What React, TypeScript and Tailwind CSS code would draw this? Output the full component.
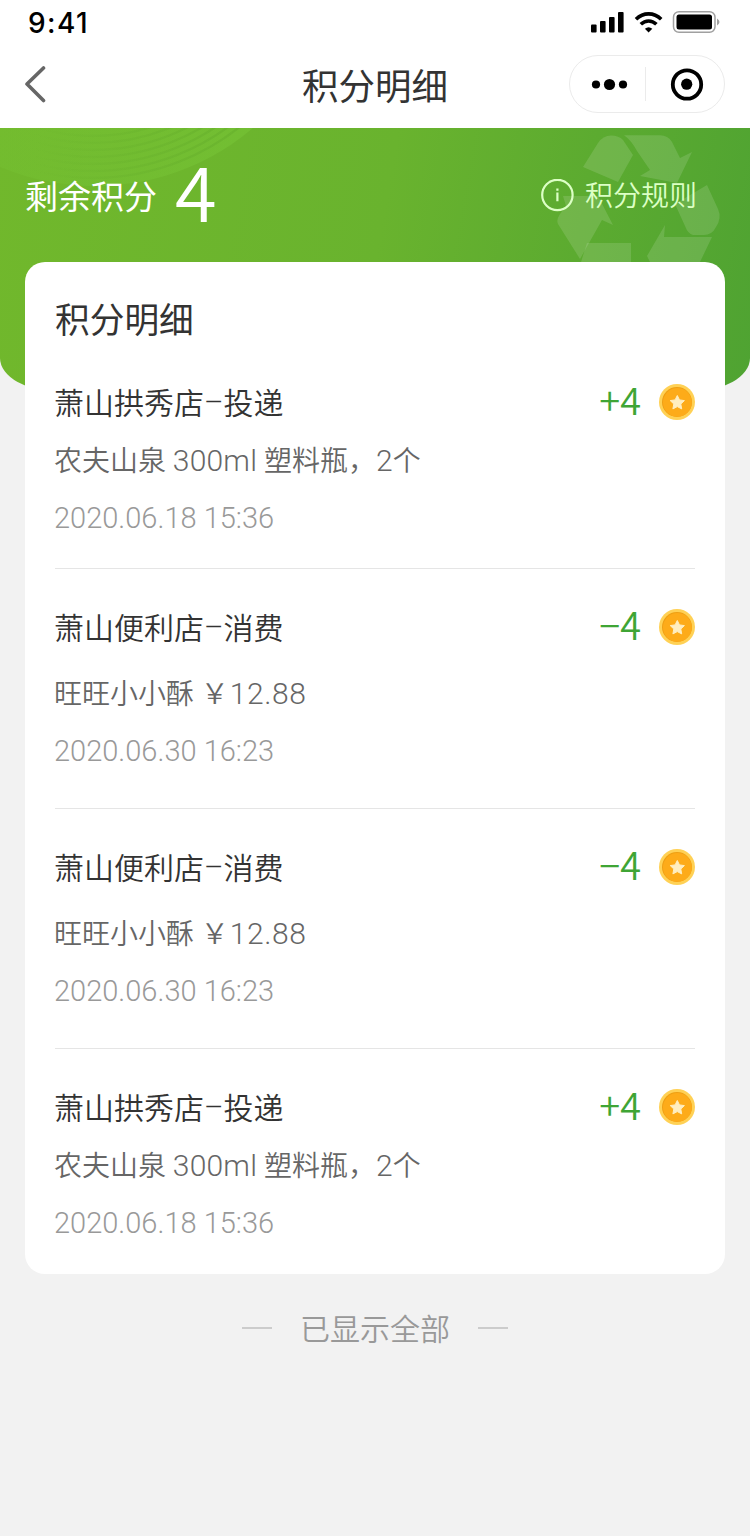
type PointRecord = {
  id: number;
  title: string;
  detail: string;
  time: string;
  change: string;
  compact?: boolean;
};

const records: PointRecord[] = [
  { id: 1, title: "萧山拱秀店–投递", detail: "农夫山泉 300ml 塑料瓶，2个", time: "2020.06.18 15:36", change: "+4", compact: true },
  { id: 2, title: "萧山便利店–消费", detail: "旺旺小小酥 ￥12.88", time: "2020.06.30 16:23", change: "−4" },
  { id: 3, title: "萧山便利店–消费", detail: "旺旺小小酥 ￥12.88", time: "2020.06.30 16:23", change: "−4" },
  { id: 4, title: "萧山拱秀店–投递", detail: "农夫山泉 300ml 塑料瓶，2个", time: "2020.06.18 15:36", change: "+4", compact: true },
];

const RINGS = [236, 229, 222, 215, 208, 201, 194];

function StatusIcons() {
  return (
    <svg width="132" height="24" viewBox="0 0 132 24">
      <rect x="3" y="14.5" width="5.6" height="8" rx="1" />
      <rect x="12" y="11" width="5.6" height="11.5" rx="1" />
      <rect x="21" y="7" width="5.6" height="15.5" rx="1" />
      <rect x="30" y="2" width="5.6" height="20.5" rx="1" />
      <g fill="none" stroke="#000" strokeWidth="3.6">
        <path d="M48 9.3C55.4 2 65.8 2 73.2 9.3" />
        <path d="M52.8 14.3C57.5 9.8 63.7 9.8 68.4 14.3" />
      </g>
      <path d="M60.6 22.5L56.9 18.7Q60.6 15.7 64.3 18.7Z" />
      <rect x="85.5" y="1.7" width="41.5" height="20.6" rx="5.5" fill="none" stroke="#a0a0a0" strokeWidth="1.5" />
      <rect x="88.5" y="4.5" width="35.5" height="15" rx="2.5" />
      <path d="M129 8.5Q134 12 129 15.5Z" fill="#a0a0a0" />
    </svg>
  );
}

function Capsule() {
  return (
    <div className="flex h-[58px] w-[156px] items-center rounded-full border border-[#ebebeb]">
      <svg className="w-[75px]" height="20" viewBox="0 0 75 20">
        <circle cx="26" cy="10.5" r="4.1" />
        <circle cx="39.5" cy="10.5" r="5.6" />
        <circle cx="53" cy="10.5" r="4.1" />
      </svg>
      <div className="h-[34px] w-px bg-[#ebebeb]" />
      <svg className="ml-6" width="34" height="34" viewBox="0 0 34 34">
        <circle cx="17" cy="17.5" r="14.2" fill="none" stroke="#000" strokeWidth="3.8" />
        <circle cx="16.7" cy="17.2" r="5.6" />
      </svg>
    </div>
  );
}

function HeroArt() {
  return (
    <svg className="absolute left-0 top-0" width="750" height="134" viewBox="0 0 750 134">
      <defs>
        <linearGradient id="disc" gradientUnits="userSpaceOnUse" x1="0" y1="0" x2="250" y2="0">
          <stop offset="0" stopColor="#7ccc3a" stopOpacity="0.2" />
          <stop offset="1" stopColor="#7ccc3a" stopOpacity="0.4" />
        </linearGradient>
        <linearGradient id="rings" gradientUnits="userSpaceOnUse" x1="30" y1="0" x2="240" y2="0">
          <stop offset="0" stopColor="#5fa828" stopOpacity="0" />
          <stop offset="0.5" stopColor="#5fa828" stopOpacity="0.2" />
          <stop offset="1" stopColor="#5fa828" stopOpacity="0.4" />
        </linearGradient>
      </defs>
      <circle cx="95" cy="-186" r="244" fill="url(#disc)" />
      {RINGS.map(r => (
        <circle key={r} cx="93" cy="-186" r={r} fill="none" stroke="url(#rings)" strokeWidth="2.4" />
      ))}
      {/* Recycling arrows */}
      <g fill="#fff" fillOpacity="0.13">
        <path d="M583 39L598 15Q603 7.5 611 7.5Q619 7.5 623 12L633 27L618 54Z" />
        <path d="M624 7.3H660Q668 7.3 672 14L680 30L692 24L677 55L640 48L650 42L637 23Q631 12 624 7.3Z" />
        <path d="M675 76L707 57L718 81Q722 90 716 99Q712 107 704 107H693Q688 106 685 98Z" />
        <path d="M665 97L664 109H712L700 134H650L647 128Z" />
        <path d="M587 115H631V134H581Z" />
        <path d="M563 68H598L613 97L602 92L580 131L558 96Q556 92 560 86L566 78Z" />
      </g>
    </svg>
  );
}

function Coin() {
  return (
    <svg width="36" height="36" viewBox="0 0 36 36">
      <circle cx="18" cy="18" r="18" fill="#ffd155" />
      <circle cx="18" cy="18" r="15" fill="#ee9f14" />
      <circle cx="18.4" cy="18.4" r="14.4" fill="#fdab19" />
      <path d="M18.3 11.5L20.5 15.9L25.4 16.6L21.8 20L22.7 24.9L18.3 22.6L13.9 24.9L14.8 20L11.2 16.6L16.1 15.9Z" fill="#ffeec0" stroke="#ffeec0" strokeWidth="1" strokeLinejoin="round" />
    </svg>
  );
}

// Latin runs are set a little larger than the Chinese text around them
function Detail({ text }: { text: string }) {
  return (
    <>
      {text.split(/([0-9a-z.]+)/).map((part, i) =>
        i % 2 === 1 ? (
          <span key={i} className={part.includes(".") ? "ml-px text-[30px] tracking-[0.6px]" : "text-[30px] tracking-[0.2px]"}>{part}</span>
        ) : part
      )}
    </>
  );
}

function RecordRow({ record }: { record: PointRecord }) {
  const [store, kind] = record.title.split("–");

  return (
    <div className="-ml-px flex flex-col">
      <div className="flex h-10 items-center justify-between">
        <div className="pt-[3px] text-[30px] font-[350] leading-10 text-[#333]">
          {store}
          <span className="inline-block -translate-y-0.5 leading-none">–</span>
          {kind}
        </div>
        <div className="flex items-center gap-[18px]">
          <span className="-mt-1.5 font-['Noto_Sans_CJK_SC'] text-[38px] font-[350] leading-10 text-[#3fa535]">{record.change}</span>
          <Coin />
        </div>
      </div>
      <div className={`h-10 whitespace-pre pt-px text-[28px] font-[350] leading-10 text-[#666] ${record.compact ? "mt-[18px]" : "mt-[26px]"}`}>
        <Detail text={record.detail} />
      </div>
      <div className="mt-[18px] h-10 text-[29px] leading-10 text-[#999]">{record.time}</div>
    </div>
  );
}

export default function App() {
  return (
    <div className="h-[1536px] w-[750px] overflow-hidden bg-[#f2f2f2] font-[Roboto,'Noto_Sans_CJK_SC',sans-serif] font-light">
      <header className="h-32 bg-white">
        <div className="flex h-11 items-center justify-between pl-7 pr-[30px]">
          <div className="pt-px font-[Inter,sans-serif] text-[28px] font-medium leading-10 tracking-[1.4px] text-black">9:41</div>
          <StatusIcons />
        </div>
        <div className="grid h-20 grid-cols-[156px_1fr_156px] items-center px-[25px]">
          <svg width="22" height="38" viewBox="0 0 22 38" fill="none" stroke="#666" strokeWidth="3.6" strokeLinecap="round" strokeLinejoin="round">
            <path d="M18.5 3L2 19L18.5 35.5" />
          </svg>
          <h1 className="pt-2 text-center text-[36.5px] font-normal leading-[54px] text-[#333]">积分明细</h1>
          <Capsule />
        </div>
      </header>

      <section className="relative h-[264px] overflow-hidden rounded-b-[60px_34px] bg-linear-[100deg] from-[#71b82c] via-[#69b32e] to-[#4fa332] text-white">
        <HeroArt />
        <div className="relative flex h-[134px] items-center justify-between pl-[25px] pr-[54px]">
          <div className="flex items-center">
            <span className="pt-1.5 text-[33px] font-normal">剩余积分</span>
            <span className="-mt-3 ml-[18px] font-['Noto_Sans_CJK_SC'] text-[76px] font-[350] leading-none">4</span>
          </div>
          <div className="flex items-center gap-[11px] text-[28px] text-[#dcffc5]">
            <svg width="33" height="33" viewBox="0 0 33 33" fill="none" stroke="currentColor" strokeWidth="2.2">
              <circle cx="16.4" cy="16" r="15.2" />
              <path d="M16.4 13.4V22.2M16.4 9.4V11.7" />
            </svg>
            <span className="-mr-px pt-1 font-[350]">积分规则</span>
          </div>
        </div>
      </section>

      <main className="relative -mt-[130px] mx-[25px] h-[1012px] rounded-[20px] bg-white px-[30px] pt-8">
        <h2 className="h-[50px] pt-0.5 text-[34.7px] font-normal leading-[50px] text-[#333]">积分明细</h2>
        <div className="mt-[38px] flex flex-col">
          {records.map((record, i) => (
            <div key={record.id} className={i === 0 ? "" : `border-t border-[#e5e5e5] pt-[38px] ${i === 1 ? "mt-[30px]" : "mt-[37px]"}`}>
              <RecordRow record={record} />
            </div>
          ))}
        </div>
      </main>

      <footer className="mt-8 flex items-center justify-center gap-[28px] text-[30px] leading-10 text-[#999]">
        <div className="h-0.5 w-[30px] bg-[#ccc]" />
        <span className="pt-[4px] font-[350]">已显示全部</span>
        <div className="h-0.5 w-[30px] bg-[#ccc]" />
      </footer>
    </div>
  );
}
